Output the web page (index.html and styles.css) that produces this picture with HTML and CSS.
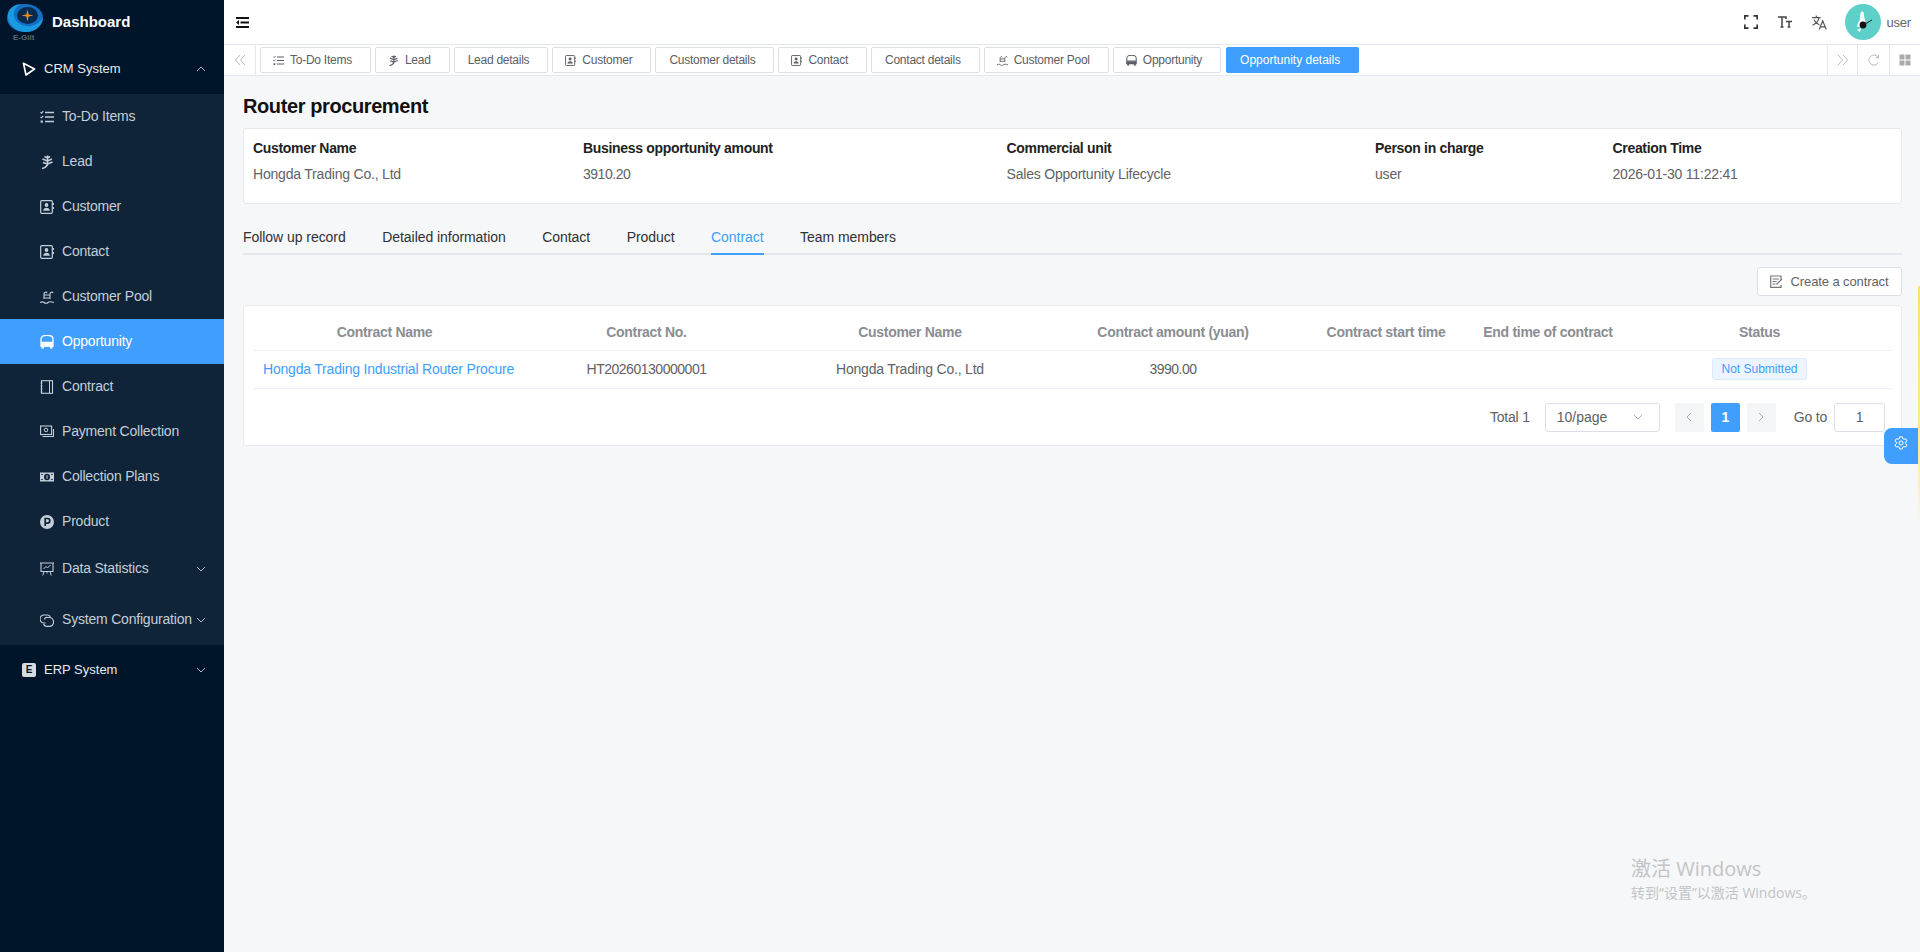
FILE: index.html
```html
<!DOCTYPE html>
<html lang="en">
<head>
    <meta charset="UTF-8">
    <meta name="viewport" content="width=device-width, initial-scale=1.0">
    <title>Opportunity details</title>
    <link rel="stylesheet" href="styles.css">
</head>
<body>
    <!-- icon sprite -->
    <svg class="sprite" xmlns="http://www.w3.org/2000/svg">
        <symbol id="i-todo" viewBox="0 0 14 14"><path d="M5 2.500h9M5 7h9M5 11.500h9" stroke="currentColor" stroke-width="1.400" fill="none"/><path d="M.5 2.200l1 1 1.800-2" stroke="currentColor" stroke-width="1.100" fill="none"/><path d="M.5 6.800l1 1 1.800-2" stroke="currentColor" stroke-width="1.100" fill="none"/><rect x=".6" y="10.500" width="2.200" height="2.200" fill="currentColor"/></symbol>
        <symbol id="i-lead" viewBox="0 0 14 14"><path d="M7.500 .5v10M7.500 3L4.500 1.500M7.500 3l2.500-1.500M7.500 6L2.500 4M7.500 6l4.500-2M7.500 9L3 7.500M7.500 9l5-2M2 13.500c2-.3 4-1.500 5.500-3.500" stroke="currentColor" stroke-width="1.500" fill="none"/></symbol>
        <symbol id="i-contact" viewBox="0 0 14 14"><rect x=".7" y=".7" width="11.600" height="12.600" rx="1" stroke="currentColor" stroke-width="1.200" fill="none"/><circle cx="6.500" cy="5" r="1.900" fill="currentColor"/><path d="M3.200 10.800c0-4 6.600-4 6.600 0z" fill="currentColor"/><path d="M13.500 3v2M13.500 7v2" stroke="currentColor" stroke-width="1"/></symbol>
        <symbol id="i-pool" viewBox="0 0 14 14"><path d="M4 9V4c0-2 2.500-2.500 3-1M10 9V4c0-2 2.500-2.500 3-1M4 5h6M4 8h6" stroke="currentColor" stroke-width="1.100" fill="none"/><path d="M0 12.500c2-1 3-1 4 0s3 1 4 0 3-1 6 0" stroke="currentColor" stroke-width="1.100" fill="none"/></symbol>
        <symbol id="i-bus" viewBox="0 0 14 14"><path d="M1 4c0-5 12-5 12 0v7H1zM1 7.500h12" stroke="currentColor" stroke-width="1.300" fill="none"/><rect x="1" y="8" width="12" height="3.500" fill="currentColor"/><rect x="1.500" y="11" width="2.500" height="2.500" fill="currentColor"/><rect x="10" y="11" width="2.500" height="2.500" fill="currentColor"/></symbol>
        <symbol id="i-book" viewBox="0 0 14 14"><rect x="1.500" y=".7" width="11" height="12.600" stroke="currentColor" stroke-width="1.100" fill="none"/><path d="M9.500 .7v12.600" stroke="currentColor" stroke-width="1"/><path d="M.5 3h2M.5 6h2M.5 9h2M.5 12h2" stroke="currentColor" stroke-width=".8"/></symbol>
        <symbol id="i-pay" viewBox="0 0 14 14"><rect x=".6" y="1" width="11" height="8.500" stroke="currentColor" stroke-width="1.100" fill="none"/><circle cx="6" cy="5" r="1.800" stroke="currentColor" stroke-width="1" fill="none"/><path d="M2.500 11.500h11V4" stroke="currentColor" stroke-width="1.100" fill="none"/></symbol>
        <symbol id="i-cash" viewBox="0 0 14 14"><path d="M0 2.500h14v9H0z" fill="currentColor"/><ellipse cx="7" cy="7" rx="3" ry="3.200" fill="#0f2438"/><path d="M6.500 5.200h1v3.600h-1z" fill="currentColor"/><path d="M1.300 4h1.500v1h-1.500zM1.300 9h1.500v1h-1.500zM11.200 4h1.500v1h-1.500zM11.200 9h1.500v1h-1.500z" fill="#0f2438"/></symbol>
        <symbol id="i-prod" viewBox="0 0 14 14"><circle cx="7" cy="7" r="7" fill="currentColor"/><path d="M5.200 11V3.500h2.300a2.300 2.300 0 010 4.600H5.200" stroke="#0f2438" stroke-width="1.700" fill="none"/></symbol>
        <symbol id="i-chart" viewBox="0 0 14 14"><path d="M1 1h12v8.500H1zM0 1h14" stroke="currentColor" stroke-width="1.100" fill="none"/><path d="M3.500 7l2.500-2.500 1.500 1.500 3-3M4 9.500l-1.200 4M10 9.500l1.200 4M7 9.500v2" stroke="currentColor" stroke-width="1" fill="none"/></symbol>
        <symbol id="i-loop" viewBox="0 0 14 14"><path d="M5.500 10H4a4 4 0 010-8h3.500a3.500 3.500 0 013 2.500" stroke="currentColor" stroke-width="1.200" fill="none"/><path d="M4.500 6.500C4.500 5 6 4 7.500 4.500H10a4.500 4.500 0 010 8.800H6.500A3.500 3.500 0 013.500 11" stroke="currentColor" stroke-width="1.200" fill="none"/></symbol>
        <symbol id="i-play" viewBox="0 0 14 14"><path d="M1.500 1.300l11 5.700-8.500 6z" stroke="currentColor" stroke-width="1.700" fill="none" stroke-linejoin="round"/></symbol>
        <symbol id="i-chev" viewBox="0 0 10 6"><path d="M1 1l4 4 4-4" stroke="currentColor" stroke-width="1" fill="none"/></symbol>
    </svg>

    <div class="layout">
        <!-- left menu -->
        <aside class="sidebar">
            <div class="brand">
                <svg class="logo" viewBox="0 0 36 36">
                    <ellipse cx="18" cy="14" rx="18" ry="14" fill="#1270c4"/>
                    <path d="M1 10C2 3 9 0 15 0 8 2 5 9 8 15c3 5 9 8 16 7 5-1 9-4 12-8-1 8-8 14-17 14C8 28 0 19 1 10z" fill="#1a9be0"/>
                    <ellipse cx="20.500" cy="11.500" rx="10.500" ry="8.500" fill="#0a2a4d"/>
                    <path d="M20.500 5.500l1.100 4.900 4.900 1.100-4.900 1.100-1.100 4.900-1.100-4.900-4.900-1.100 4.900-1.100z" fill="#f08a24"/>
                    <text x="6" y="35.500" class="logo-text">E-Gilt</text>
                </svg>
                <span class="brand-name">Dashboard</span>
            </div>

            <div class="menu-head">
                <svg class="ico"><use href="#i-play"/></svg>
                <span class="menu-label">CRM System</span>
                <svg class="chev up"><use href="#i-chev"/></svg>
            </div>
            <div class="submenu">
                <div class="menu-item"><svg class="ico"><use href="#i-todo"/></svg><span class="menu-label">To-Do Items</span></div>
                <div class="menu-item"><svg class="ico"><use href="#i-lead"/></svg><span class="menu-label">Lead</span></div>
                <div class="menu-item"><svg class="ico"><use href="#i-contact"/></svg><span class="menu-label">Customer</span></div>
                <div class="menu-item"><svg class="ico"><use href="#i-contact"/></svg><span class="menu-label">Contact</span></div>
                <div class="menu-item"><svg class="ico"><use href="#i-pool"/></svg><span class="menu-label">Customer Pool</span></div>
                <div class="menu-item active"><svg class="ico"><use href="#i-bus"/></svg><span class="menu-label">Opportunity</span></div>
                <div class="menu-item"><svg class="ico"><use href="#i-book"/></svg><span class="menu-label">Contract</span></div>
                <div class="menu-item"><svg class="ico"><use href="#i-pay"/></svg><span class="menu-label">Payment Collection</span></div>
                <div class="menu-item"><svg class="ico"><use href="#i-cash"/></svg><span class="menu-label">Collection Plans</span></div>
                <div class="menu-item"><svg class="ico"><use href="#i-prod"/></svg><span class="menu-label">Product</span></div>
                <div class="menu-item group"><svg class="ico"><use href="#i-chart"/></svg><span class="menu-label">Data Statistics</span><svg class="chev"><use href="#i-chev"/></svg></div>
                <div class="menu-item group"><svg class="ico"><use href="#i-loop"/></svg><span class="menu-label">System Configuration</span><svg class="chev"><use href="#i-chev"/></svg></div>
            </div>
            <div class="menu-head erp">
                <span class="erp-badge">E</span>
                <span class="menu-label">ERP System</span>
                <svg class="chev"><use href="#i-chev"/></svg>
            </div>
        </aside>

        <div class="main">
            <!-- top bar -->
            <header class="topbar">
                <svg class="burger" viewBox="0 0 13 11"><path d="M0 1h13M4.500 5.500H13M0 10h13" stroke="#111" stroke-width="2"/><path d="M0 5.500l3-2.500v5z" fill="#111"/></svg>
                <div class="top-tools">
                    <svg class="tool" viewBox="0 0 14 14"><path d="M.8 4.500V.8h3.700M9.500 .8h3.700v3.700M13.200 9.500v3.700H9.500M4.500 13.200H.8V9.500" stroke="#333" stroke-width="1.700" fill="none"/></svg>
                    <svg class="tool" viewBox="0 0 14 14"><path d="M0 2h8v2M4 2v10M2.500 12h3M8 6.500h6M11 6.500V12M9.700 12h2.600" stroke="#444" stroke-width="1.500" fill="none"/></svg>
                    <svg class="tool big" viewBox="0 0 14 14"><path d="M0 2.500h8M4 .5v2M6.500 2.500C6 6 3 8.500 .5 9.500M1.800 4.500C3 7 5 8.500 7 9.300M6.800 13.500L10 5.500l3.300 8M8 11h4" stroke="#555" stroke-width="1.100" fill="none"/></svg>
                    <div class="avatar">
                        <svg viewBox="0 0 36 36"><path d="M16 8c2.500-1.500 3 1 3 4l1.500 6c1 3-1 5-3 5h-5c-1-3 2-5 2.500-8 .3-3 0-5 1-7z" fill="#fff"/><circle cx="18" cy="21" r="3.400" fill="#111"/><path d="M20 20l7-4" stroke="#222" stroke-width="1"/><path d="M12 26l4-2-1 4z" fill="#fff"/></svg>
                    </div>
                    <span class="user-name">user</span>
                </div>
            </header>

            <!-- opened pages -->
            <nav class="tabbar">
                <div class="tab-btn left"><svg viewBox="0 0 12 12"><path d="M6 1L1.500 6 6 11M11 1L6.500 6 11 11" stroke="#b5b9bf" fill="none"/></svg></div>
                <div class="tab-list">
                    <div class="tab-item"><svg class="tab-ico"><use href="#i-todo"/></svg>To-Do Items</div>
                    <div class="tab-item"><svg class="tab-ico"><use href="#i-lead"/></svg>Lead</div>
                    <div class="tab-item">Lead details</div>
                    <div class="tab-item"><svg class="tab-ico"><use href="#i-contact"/></svg>Customer</div>
                    <div class="tab-item">Customer details</div>
                    <div class="tab-item"><svg class="tab-ico"><use href="#i-contact"/></svg>Contact</div>
                    <div class="tab-item">Contact details</div>
                    <div class="tab-item"><svg class="tab-ico"><use href="#i-pool"/></svg>Customer Pool</div>
                    <div class="tab-item"><svg class="tab-ico"><use href="#i-bus"/></svg>Opportunity</div>
                    <div class="tab-item current">Opportunity details</div>
                </div>
                <div class="tab-btn"><svg viewBox="0 0 12 12"><path d="M1 1l4.500 5L1 11M6 1l4.500 5L6 11" stroke="#b5b9bf" fill="none"/></svg></div>
                <div class="tab-btn narrow"><svg viewBox="0 0 12 12"><path d="M10.300 8.500A5 5 0 1110 3.200M10.500 .8v3H7.500" stroke="#b5b9bf" fill="none"/></svg></div>
                <div class="tab-btn grid"><svg viewBox="0 0 12 12"><path d="M.5 .5h5v5h-5zM6.500 .5h5v5h-5zM.5 6.500h5v5h-5zM6.500 6.500h5v5h-5z" fill="#aaa"/></svg></div>
            </nav>

            <!-- page content -->
            <main class="content">
                <h1 class="page-title">Router procurement</h1>

                <section class="info-card">
                    <div class="info-col c1"><div class="info-label">Customer Name</div><div class="info-value">Hongda Trading Co., Ltd</div></div>
                    <div class="info-col c2"><div class="info-label">Business opportunity amount</div><div class="info-value num">3910.20</div></div>
                    <div class="info-col c3"><div class="info-label">Commercial unit</div><div class="info-value">Sales Opportunity Lifecycle</div></div>
                    <div class="info-col c4"><div class="info-label">Person in charge</div><div class="info-value">user</div></div>
                    <div class="info-col"><div class="info-label">Creation Time</div><div class="info-value">2026-01-30 11:22:41</div></div>
                </section>

                <div class="detail-tabs">
                    <div class="detail-tab">Follow up record</div>
                    <div class="detail-tab">Detailed information</div>
                    <div class="detail-tab">Contact</div>
                    <div class="detail-tab">Product</div>
                    <div class="detail-tab on">Contract</div>
                    <div class="detail-tab">Team members</div>
                </div>

                <div class="toolbar">
                    <button class="create-btn">
                        <svg viewBox="0 0 13 13"><path d="M11 5V1H.7v11.300H11V10M2.500 4h6.500M2.500 6.500h4M2.500 9h3M6.500 9.500l5.500-5.500" stroke="#777" stroke-width="1.200" fill="none"/></svg>
                        Create a contract
                    </button>
                </div>

                <section class="table-card">
                    <table class="data-table">
                        <thead>
                            <tr>
                                <th class="w-name">Contract Name</th>
                                <th class="w-no">Contract No.</th>
                                <th class="w-cust">Customer Name</th>
                                <th class="w-amt">Contract amount (yuan)</th>
                                <th class="w-start">Contract start time</th>
                                <th class="w-end">End time of contract</th>
                                <th class="w-status">Status</th>
                            </tr>
                        </thead>
                        <tbody>
                            <tr>
                                <td class="link-cell"><a class="link">Hongda Trading Industrial Router Procure</a></td>
                                <td class="num">HT20260130000001</td>
                                <td>Hongda Trading Co., Ltd</td>
                                <td class="num">3990.00</td>
                                <td></td>
                                <td></td>
                                <td><span class="tag">Not Submitted</span></td>
                            </tr>
                        </tbody>
                    </table>
                    <div class="pager">
                        <span class="pager-total">Total 1</span>
                        <div class="pager-size">10/page<svg class="chev"><use href="#i-chev"/></svg></div>
                        <div class="pager-btns">
                            <div class="pager-btn"><svg viewBox="0 0 6 10"><path d="M5 1L1 5l4 4" stroke="#a8abb2" fill="none"/></svg></div>
                            <div class="pager-btn current">1</div>
                            <div class="pager-btn"><svg viewBox="0 0 6 10"><path d="M1 1l4 4-4 4" stroke="#a8abb2" fill="none"/></svg></div>
                        </div>
                        <span class="pager-goto">Go to</span>
                        <div class="pager-input">1</div>
                    </div>
                </section>
            </main>
        </div>
    </div>

    <!-- settings button and yellow edge on the right -->
    <div class="edge-strip"></div>
    <div class="settings-btn">
        <svg viewBox="0 0 14 14"><path d="M5.700 .8h2.600l.4 1.800 1.300.7 1.700-.6 1.300 2.200-1.400 1.200v1.600l1.400 1.200-1.300 2.200-1.700-.6-1.300.7-.4 1.800H5.700l-.4-1.800-1.300-.7-1.700.6L1 8.900l1.400-1.200V6.100L1 4.900l1.300-2.200 1.700.6 1.300-.7z" stroke="#fff" fill="none"/><circle cx="7" cy="7" r="2" stroke="#fff" fill="none"/></svg>
    </div>

    <!-- windows watermark -->
    <div class="watermark">
        <div class="wm-title">激活 Windows</div>
        <div class="wm-sub">转到“设置”以激活 Windows。</div>
    </div>
</body>
</html>
```
FILE: styles.css
```css
* {
    box-sizing: border-box;
}
body {
    font-family: "Liberation Sans", "Noto Sans CJK SC", sans-serif;
    letter-spacing: -0.2px;
    margin: 0;
    padding: 0;
    background-color: #f5f7f9;
    overflow: hidden;
    height: 100vh;
    position: relative;
}
.sprite {
    display: none;
}
.layout {
    display: flex;
    height: 100vh;
}

/* left menu */
.sidebar {
    width: 224px;
    flex-shrink: 0;
    background-color: #001529;
    color: #c3ced8;
    font-size: 14px;
}
.brand {
    height: 44px;
    display: flex;
    align-items: center;
    padding-left: 7px;
}
.logo {
    width: 36px;
    height: 36px;
    margin-right: 9px;
}
.logo-text {
    font-size: 8px;
    font-weight: bold;
    letter-spacing: 0;
    fill: #5d6b78;
}
.brand-name {
    color: #fff;
    font-size: 15px;
    font-weight: bold;
    letter-spacing: 0;
    padding-bottom: 2px;
}
.menu-head {
    height: 50px;
    display: flex;
    align-items: center;
    padding-left: 22px;
    color: #e6ebf0;
    font-size: 13px;
    letter-spacing: 0;
}
.menu-head .ico {
    margin-right: 8px;
    color: #fff;
}
.menu-label {
    flex: 1;
    white-space: nowrap;
    padding-bottom: 2px;
}
.ico {
    width: 14px;
    height: 14px;
    flex-shrink: 0;
}
.chev {
    width: 10px;
    height: 6px;
    color: #aeb9c4;
    flex-shrink: 0;
    margin-right: 18px;
}
.chev.up {
    transform: rotate(180deg);
}
.submenu {
    background-color: #0f2438;
}
.menu-item {
    height: 45px;
    display: flex;
    align-items: center;
    padding-left: 40px;
}
.menu-item .ico {
    margin-right: 8px;
}
.menu-item.active {
    background-color: #409eff;
    color: #fff;
}
.menu-item.group {
    height: 50.500px;
}
.erp-badge {
    width: 14px;
    height: 14px;
    margin-right: 8px;
    background-color: #d5dbe1;
    color: #001529;
    font-size: 10px;
    font-weight: bold;
    text-align: center;
    line-height: 14px;
    border-radius: 2px;
}

.main {
    flex: 1;
    min-width: 0;
    display: flex;
    flex-direction: column;
}

/* top bar */
.topbar {
    height: 45px;
    background-color: #fff;
    border-bottom: 1px solid #e4e7ed;
    display: flex;
    align-items: center;
    justify-content: space-between;
    padding: 0 9px 0 12px;
    flex-shrink: 0;
}
.burger {
    width: 13px;
    height: 11px;
}
.top-tools {
    display: flex;
    align-items: center;
}
.tool {
    width: 14px;
    height: 14px;
    margin-right: 20px;
}
.tool.big {
    width: 15px;
    height: 15px;
    margin-right: 18px;
}
.avatar {
    width: 36px;
    height: 36px;
    border-radius: 50%;
    background-color: #5fcfc9;
    margin-right: 6px;
}
.avatar svg {
    display: block;
}
.user-name {
    font-size: 13px;
    color: #666;
}

/* opened pages */
.tabbar {
    height: 31px;
    background-color: #fff;
    border-bottom: 1px solid #e4e7ed;
    display: flex;
    align-items: stretch;
    flex-shrink: 0;
}
.tab-btn {
    width: 30px;
    display: flex;
    align-items: center;
    justify-content: center;
    border-left: 1px solid #e4e7ed;
}
.tab-btn.left {
    width: 32px;
    border-left: none;
    border-right: 1px solid #e4e7ed;
}
.tab-btn.narrow {
    width: 32px;
}
.tab-btn.grid {
    width: 31px;
}
.tab-btn svg {
    width: 12px;
    height: 12px;
}
.tab-list {
    flex: 1;
    display: flex;
    align-items: flex-start;
    gap: 4px;
    padding: 2px 0 0 4px;
    min-width: 0;
}
.tab-item {
    height: 26px;
    display: flex;
    align-items: center;
    padding: 0 18px 0 13px;
    border: 1px solid #dcdfe6;
    border-radius: 2px;
    font-size: 12px;
    letter-spacing: -0.25px;
    color: #5a5e66;
    white-space: nowrap;
}
.tab-ico {
    width: 11px;
    height: 11px;
    margin-left: -1px;
    margin-right: 6px;
    flex-shrink: 0;
}
.tab-item.current {
    margin-left: 1px;
    background-color: #409eff;
    border-color: #409eff;
    color: #fff;
    letter-spacing: 0;
}

/* page content */
.content {
    flex: 1;
    padding: 0 18px 0 19px;
    min-height: 0;
}
.page-title {
    margin: 0;
    height: 52px;
    line-height: 61px;
    font-size: 20px;
    font-weight: bold;
    letter-spacing: -0.4px;
    color: #111;
}
.info-card {
    height: 76px;
    background-color: #fff;
    border: 1px solid #e8eaed;
    border-radius: 3px;
    padding: 10px 0 0 9px;
    display: flex;
}
.info-col {
    flex-shrink: 0;
}
.c1 {
    width: 330px;
}
.c2 {
    width: 423.500px;
}
.c3 {
    width: 368.500px;
}
.c4 {
    width: 237.500px;
}
.info-label {
    font-size: 14px;
    font-weight: bold;
    letter-spacing: -0.32px;
    color: #222;
    line-height: 18px;
}
.info-value {
    font-size: 14px;
    color: #606266;
    line-height: 18px;
    margin-top: 8px;
}
.num {
    letter-spacing: -0.48px;
}
.detail-tabs {
    margin-top: 20px;
    height: 31px;
    display: flex;
    gap: 36.500px;
    border-bottom: 2px solid #e4e7ed;
    font-size: 14px;
    letter-spacing: -0.05px;
    color: #303133;
}
.detail-tab {
    height: 31px;
    line-height: 27px;
}
.detail-tab.on {
    color: #409eff;
    border-bottom: 2px solid #409eff;
}
.toolbar {
    display: flex;
    justify-content: flex-end;
    margin-top: 12px;
}
.create-btn {
    width: 145px;
    height: 29px;
    background-color: #fff;
    border: 1px solid #dcdfe6;
    border-radius: 3px;
    font-family: inherit;
    font-size: 13px;
    letter-spacing: -0.1px;
    color: #606266;
    display: flex;
    align-items: center;
    justify-content: center;
    gap: 7px;
    padding: 0;
}
.create-btn svg {
    width: 13px;
    height: 13px;
}
.table-card {
    margin-top: 9px;
    height: 141px;
    background-color: #fff;
    border: 1px solid #e8eaed;
    border-radius: 3px;
    padding: 8px 9px 0;
}
.data-table {
    width: 100%;
    border-collapse: collapse;
    table-layout: fixed;
    font-size: 14px;
}
.data-table th {
    height: 36px;
    color: #8a8d93;
    font-weight: bold;
    letter-spacing: -0.3px;
    border-bottom: 1px solid #ebeef5;
    padding: 0;
}
.data-table td {
    height: 38px;
    color: #606266;
    text-align: center;
    border-bottom: 1px solid #ebeef5;
    padding: 0;
}
.w-name { width: 263px; }
.w-no { width: 261px; }
.w-cust { width: 266px; }
.w-amt { width: 260px; }
.w-start { width: 166px; }
.w-end { width: 158px; }
.data-table td.link-cell {
    text-align: left;
    padding-left: 10px;
    white-space: nowrap;
    overflow: hidden;
}
.link {
    color: #409eff;
}
.tag {
    display: inline-block;
    height: 22px;
    line-height: 20px;
    padding: 0 8px;
    background-color: #ecf5ff;
    border: 1px solid #d9ecff;
    border-radius: 3px;
    font-size: 12px;
    letter-spacing: 0;
    color: #409eff;
}
.pager {
    display: flex;
    align-items: center;
    justify-content: flex-end;
    margin-top: 14px;
    padding-right: 7px;
    font-size: 14px;
    color: #606266;
}
.pager-size {
    width: 115px;
    height: 29px;
    margin-left: 15px;
    border: 1px solid #dcdfe6;
    border-radius: 3px;
    display: flex;
    align-items: center;
    justify-content: space-between;
    padding-left: 11px;
    letter-spacing: 0;
}
.pager-size .chev {
    margin-right: 16px;
    color: #a8abb2;
}
.pager-btns {
    display: flex;
    gap: 7px;
    margin-left: 15px;
}
.pager-btn {
    width: 29px;
    height: 29px;
    background-color: #f5f6f8;
    border-radius: 2px;
    display: flex;
    align-items: center;
    justify-content: center;
    font-weight: bold;
}
.pager-btn svg {
    width: 6px;
    height: 10px;
}
.pager-btn.current {
    background-color: #409eff;
    color: #fff;
}
.pager-goto {
    margin-left: 18px;
}
.pager-input {
    width: 51px;
    height: 29px;
    margin-left: 7px;
    border: 1px solid #dcdfe6;
    border-radius: 3px;
    text-align: center;
    line-height: 27px;
}

/* floating bits */
.edge-strip {
    position: absolute;
    right: 0;
    top: 286px;
    width: 2px;
    height: 240px;
    background: linear-gradient(#ffe26b, #ffeb9e 70%, rgba(255, 240, 170, 0));
}
.settings-btn {
    position: absolute;
    right: 2px;
    top: 428px;
    width: 34px;
    height: 36px;
    padding-bottom: 6px;
    background-color: #409eff;
    border-radius: 8px 0 0 8px;
    display: flex;
    align-items: center;
    justify-content: center;
}
.settings-btn svg {
    width: 14px;
    height: 14px;
}
.watermark {
    position: absolute;
    left: 1631px;
    top: 855px;
    font-family: "Open Sans", "Noto Sans CJK SC", sans-serif;
    letter-spacing: 0;
    color: #c2c4c8;
}
.wm-title {
    font-size: 20px;
    line-height: 28px;
}
.wm-sub {
    font-size: 14px;
    line-height: 19px;
}
```
